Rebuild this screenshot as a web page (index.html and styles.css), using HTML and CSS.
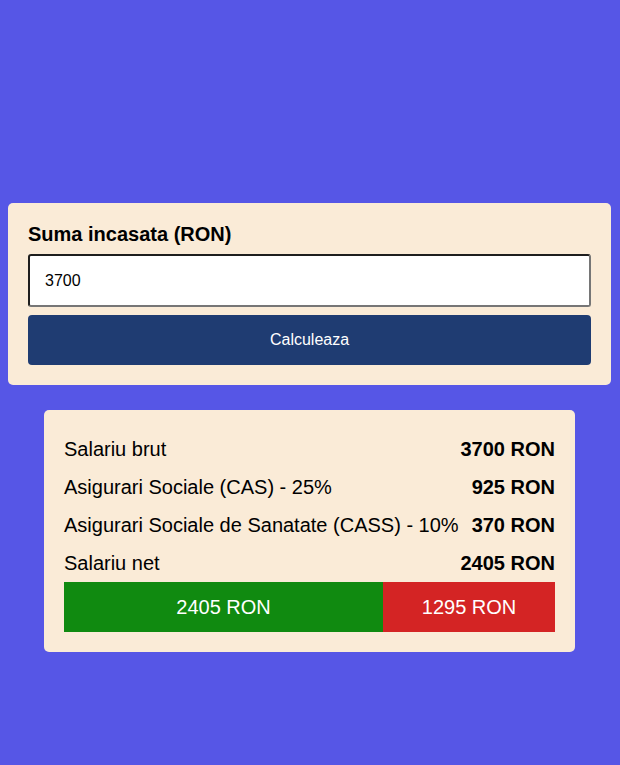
FILE: index.html
```html
<!DOCTYPE html>
<html lang="ro">
<head>
<meta charset="utf-8">
<title>Calculator salariu</title>
<link rel="stylesheet" href="styles.css">
</head>
<body>
<main class="page">
  <form class="card form-card">
    <label class="label" for="suma">Suma incasata (RON)</label>
    <input class="input" id="suma" type="text" value="3700">
    <button class="btn" type="button">Calculeaza</button>
  </form>
  <section class="card result-card">
    <div class="row"><span class="name">Salariu brut</span><span class="value">3700 RON</span></div>
    <div class="row"><span class="name">Asigurari Sociale (CAS) - 25%</span><span class="value">925 RON</span></div>
    <div class="row"><span class="name">Asigurari Sociale de Sanatate (CASS) - 10%</span><span class="value">370 RON</span></div>
    <div class="row"><span class="name">Salariu net</span><span class="value">2405 RON</span></div>
    <div class="bar">
      <div class="seg seg-net" style="width: 65%">2405 RON</div>
      <div class="seg seg-tax" style="width: 35%">1295 RON</div>
    </div>
  </section>
</main>
</body>
</html>
```
FILE: styles.css
```css
html, body {
  margin: 0;
  padding: 0;
}
body {
  background: #5656e6;
  font-family: "Liberation Sans", Arial, sans-serif;
  color: #000;
  min-height: 765px;
}
.page {
  padding: 203px 9px 0 8px;
  display: flex;
  flex-direction: column;
  align-items: center;
}
.card {
  background: #faebd7;
  border-radius: 5px;
  padding: 20px;
  box-sizing: border-box;
}
.form-card {
  width: 100%;
  display: flex;
  flex-direction: column;
  margin: 0;
}
.label {
  font-size: 20px;
  font-weight: bold;
  line-height: 23px;
  margin-bottom: 8px;
}
.input {
  font-family: "Liberation Sans", Arial, sans-serif;
  font-size: 16px;
  line-height: 19px;
  height: 53px;
  box-sizing: border-box;
  padding: 15px;
  border: 2px solid #767676;
  border-top-color: #1e1e1e;
  border-left-color: #1e1e1e;
  border-radius: 3px;
  background: #fff;
  color: #000;
  outline: none;
  margin: 0;
}
.btn {
  margin-top: 8px;
  height: 50px;
  border: none;
  border-radius: 4px;
  background: #1f3c72;
  color: #fff;
  font-family: "Liberation Sans", Arial, sans-serif;
  font-size: 16px;
  cursor: pointer;
}
.result-card {
  margin-top: 25px;
  width: fit-content;
}
.row {
  display: flex;
  justify-content: space-between;
  gap: 13px;
  font-size: 20px;
  line-height: 38px;
  height: 38px;
  white-space: nowrap;
}
.value {
  font-weight: bold;
}
.bar {
  display: flex;
  height: 50px;
}
.seg {
  display: flex;
  align-items: center;
  justify-content: center;
  color: #fff;
  font-size: 20px;
  white-space: nowrap;
}
.seg-net {
  background: #108a10;
}
.seg-tax {
  background: #d42424;
}
```
